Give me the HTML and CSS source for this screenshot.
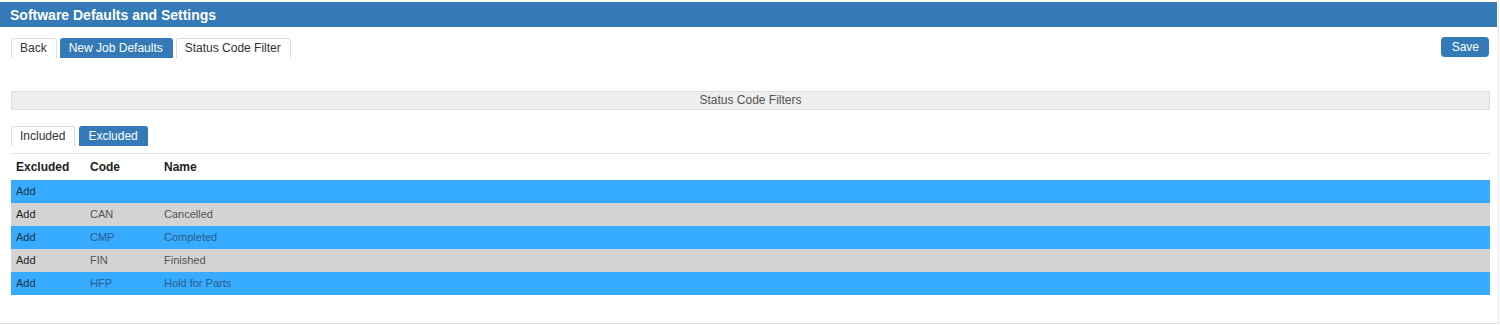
FILE: index.html
```html
<!DOCTYPE html>
<html lang="en">
<head>
    <meta charset="UTF-8">
    <title>Software Defaults and Settings</title>
    <link rel="stylesheet" href="styles.css">
</head>
<body>
    <div class="panel">
        <div class="panel-heading">Software Defaults and Settings</div>
        <div class="panel-body">
            <div class="toolbar">
                <div class="tabs">
                    <span class="tab">Back</span>
                    <span class="tab active">New Job Defaults</span>
                    <span class="tab">Status Code Filter</span>
                </div>
                <button class="save-button">Save</button>
            </div>

            <div class="section-title">Status Code Filters</div>

            <div class="tabs sub-tabs">
                <span class="tab">Included</span>
                <span class="tab active">Excluded</span>
            </div>

            <table class="codes">
                <thead>
                    <tr><th>Excluded</th><th>Code</th><th>Name</th></tr>
                </thead>
                <tbody>
                    <tr class="blue"><td>Add</td><td></td><td></td></tr>
                    <tr class="grey"><td>Add</td><td>CAN</td><td>Cancelled</td></tr>
                    <tr class="blue"><td>Add</td><td>CMP</td><td>Completed</td></tr>
                    <tr class="grey"><td>Add</td><td>FIN</td><td>Finished</td></tr>
                    <tr class="blue"><td>Add</td><td>HFP</td><td>Hold for Parts</td></tr>
                </tbody>
            </table>
        </div>
    </div>
</body>
</html>
```

FILE: styles.css
```css
body {
    font-family: "Liberation Sans", Arial, sans-serif;
    margin: 0;
    background-color: white;
    color: #333;
}
.panel {
    margin-top: 2px;
    width: 1499px;
    height: 322px;
    box-sizing: border-box;
    border-right: 1px solid #e8e8e8;
    border-bottom: 1px solid #ddd;
}
.panel-heading {
    width: 1497px;
    height: 25px;
    line-height: 26px;
    background-color: #337ab7;
    color: white;
    font-weight: bold;
    font-size: 14px;
    padding-left: 10px;
    box-sizing: border-box;
}
.panel-body {
    padding: 10px 8px 0 11px;
}
.toolbar {
    display: flex;
    justify-content: space-between;
    align-items: flex-start;
    margin-top: 1px;
}
.tabs {
    display: flex;
    gap: 3px;
}
.tab {
    height: 19px;
    line-height: 19px;
    padding: 0 9px 0 8px;
    font-size: 12px;
    border: 1px solid #ddd;
    border-bottom: none;
    border-radius: 3px 3px 0 0;
    background-color: white;
    color: #333;
}
.tab.active {
    background-color: #337ab7;
    border-color: #337ab7;
    color: white;
}
.save-button {
    margin: -1px 1px 0 0;
    height: 20px;
    padding: 0 10px 0 11px;
    border: none;
    border-radius: 4px;
    background-color: #337ab7;
    color: white;
    font-family: "Liberation Sans", Arial, sans-serif;
    font-size: 12px;
}
.section-title {
    margin-top: 33px;
    height: 17px;
    line-height: 17px;
    background-color: #eee;
    border: 1px solid #ddd;
    text-align: center;
    font-size: 12px;
    color: #555;
}
.sub-tabs {
    margin-top: 16px;
    gap: 4px;
    padding-bottom: 7px;
    border-bottom: 1px solid #e3e3e3;
}
.codes {
    width: 100%;
    border-collapse: collapse;
    font-size: 11px;
}
.codes th {
    text-align: left;
    font-size: 12px;
    font-weight: bold;
    color: #222;
    height: 26px;
    padding: 0 0 0 5px;
}
.codes th:nth-child(1),
.codes td:nth-child(1) {
    width: 69px;
}
.codes th:nth-child(2),
.codes td:nth-child(2) {
    width: 69px;
}
.codes td {
    height: 22px;
    padding: 0 0 1px 5px;
    color: #555;
}
.codes td:first-child {
    color: #222;
}
.codes tr.blue {
    background-color: #36abff;
}
.codes tr.blue td {
    color: #2c5d8a;
}
.codes tr.blue td:first-child {
    color: #1f3348;
}
.codes tr.grey {
    background-color: #d3d3d3;
}
```
